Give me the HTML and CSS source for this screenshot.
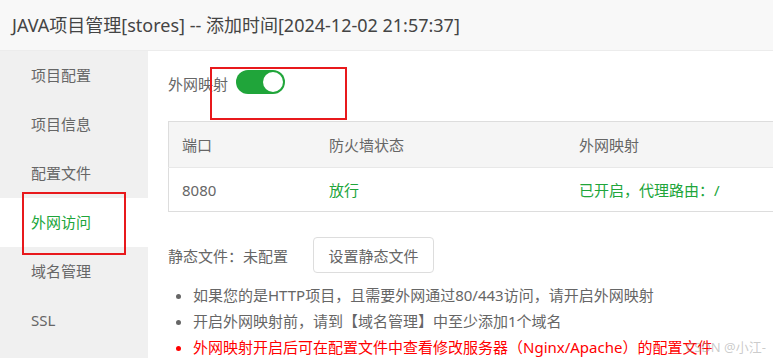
FILE: index.html
```html
<!DOCTYPE html>
<html>
<head>
  <meta charset="UTF-8">
  <title>外网映射</title>
  <link rel="stylesheet" href="styles.css">
</head>
<body>

  <div class="naglowek">JAVA项目管理[stores] -- 添加时间[2024-12-02 21:57:37]</div>

  <div class="uklad">
    <div class="menu">
      <div class="pozycja">项目配置</div>
      <div class="pozycja">项目信息</div>
      <div class="pozycja">配置文件</div>
      <div class="pozycja aktywna">外网访问</div>
      <div class="pozycja">域名管理</div>
      <div class="pozycja">SSL</div>
      <div class="ramka ramka-menu"></div>
    </div>

    <div class="tresc">
      <div class="przelacznik-wiersz">
        <span>外网映射</span>
        <span class="przelacznik"><span class="kulka"></span></span>
        <div class="ramka ramka-przelacznik"></div>
      </div>

      <table class="tabela">
        <tr>
          <th class="k1">端口</th>
          <th class="k2">防火墙状态</th>
          <th>外网映射</th>
        </tr>
        <tr>
          <td>8080</td>
          <td class="zielony">放行</td>
          <td class="zielony">已开启，代理路由：/</td>
        </tr>
      </table>

      <div class="statyczne">
        <span>静态文件：未配置</span>
        <button class="przycisk">设置静态文件</button>
      </div>

      <ul class="uwagi">
        <li>如果您的是HTTP项目，且需要外网通过80/443访问，请开启外网映射</li>
        <li>开启外网映射前，请到【域名管理】中至少添加1个域名</li>
        <li class="czerwony">外网映射开启后可在配置文件中查看修改服务器（Nginx/Apache）的配置文件</li>
      </ul>
    </div>
  </div>

  <div class="znak">CSDN @小江-</div>

</body>
</html>
```

FILE: styles.css
```css
body {
  margin: 0;
  padding: 0;
  background-color: white;
  font-family: "Noto Sans", "Noto Sans CJK SC", sans-serif;
  font-size: 15px;
  color: #666;
  overflow: hidden;
}

.naglowek {
  height: 51px;
  line-height: 50px;
  padding-left: 12px;
  font-size: 18px;
  color: #444;
  background-color: #f8f8f8;
  border-bottom: 1px solid #ececec;
  box-sizing: border-box;
  white-space: nowrap;
}

.uklad {
  display: flex;
  height: 307px;
}

.menu {
  position: relative;
  width: 148px;
  flex-shrink: 0;
  background-color: #f0f0f0;
}

.pozycja {
  height: 49px;
  line-height: 49px;
  padding-left: 31px;
  color: #666;
}

.aktywna {
  background-color: white;
  color: #20a53a;
}

.ramka {
  position: absolute;
  border: 2px solid #e8191c;
  box-sizing: border-box;
}

.ramka-menu {
  left: 22px;
  top: 141px;
  width: 104px;
  height: 63px;
}

.tresc {
  flex: 1;
  padding: 18px 0 0 20px;
  overflow: hidden;
}

.przelacznik-wiersz {
  position: relative;
  display: flex;
  align-items: center;
  gap: 8px;
  height: 28px;
}

.przelacznik {
  position: relative;
  display: inline-block;
  width: 49px;
  height: 24px;
  border-radius: 12px;
  background-color: #20a53a;
  margin-top: -3px;
}

.kulka {
  position: absolute;
  right: 2px;
  top: 2px;
  width: 20px;
  height: 20px;
  border-radius: 50%;
  background-color: white;
}

.ramka-przelacznik {
  left: 42px;
  top: -2px;
  width: 137px;
  height: 53px;
}

.tabela {
  margin-top: 24px;
  width: 700px;
  table-layout: fixed;
  border-collapse: collapse;
  border: 1px solid #ddd;
}

.tabela th {
  height: 45px;
  background-color: #f5f5f5;
  font-weight: normal;
  text-align: left;
  padding: 0 13px;
  color: #666;
  border-bottom: 1px solid #e8e8e8;
}

.tabela td {
  height: 43px;
  padding: 0 13px;
  color: #666;
  white-space: nowrap;
}

.tabela .k1 {
  width: 121px;
}

.tabela .k2 {
  width: 224px;
}

.zielony {
  color: #20a53a !important;
}

.statyczne {
  display: flex;
  align-items: center;
  gap: 25px;
  margin-top: 25px;
}

.przycisk {
  width: 121px;
  height: 36px;
  background-color: white;
  border: 1px solid #ddd;
  border-radius: 4px;
  font-family: inherit;
  font-size: 15px;
  color: #666;
}

.uwagi {
  margin: 9px 0 0 0;
  padding-left: 25px;
  white-space: nowrap;
}

.uwagi li {
  line-height: 26px;
  color: #666;
}

.uwagi li::marker {
  color: #666;
}

.uwagi .czerwony {
  color: #f00;
}

.uwagi .czerwony::marker {
  color: #f00;
}

.znak {
  position: absolute;
  left: 686px;
  top: 337px;
  font-size: 13px;
  color: rgba(160, 160, 160, 0.55);
  white-space: nowrap;
}
```
